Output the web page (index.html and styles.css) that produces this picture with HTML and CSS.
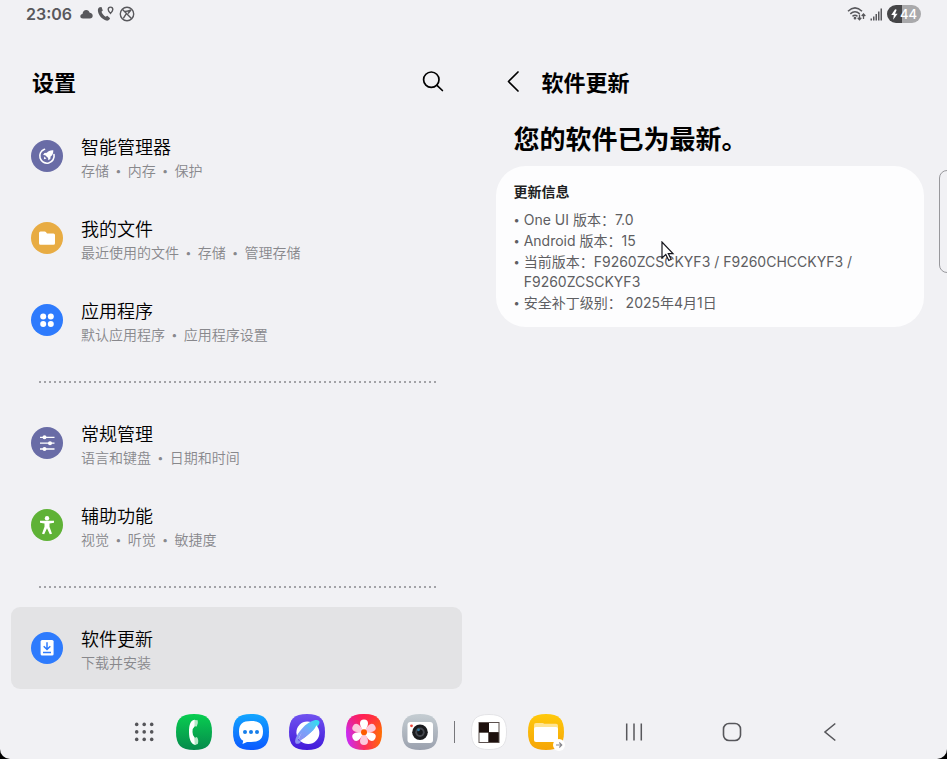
FILE: index.html
```html
<!DOCTYPE html>
<html lang="zh-CN">
<head>
<meta charset="utf-8">
<meta name="viewport" content="width=device-width, initial-scale=1">
<title>设置</title>
<link rel="stylesheet" href="styles.css">
</head>
<body>
<div class="screen">
  <header class="status">
    <div class="status-group">
      <time class="clock">23:06</time>
      <svg width="13" height="10" viewBox="0 0 13 10"><path fill="currentColor" d="M3 9.500C1.300 9.500.3 8.500.3 7.200.3 6 1.200 5.100 2.500 4.900 2.800 2.500 4.200 1 6.200 1c1.900 0 3 1.100 3.500 2.800 1.800.1 3 1.300 3 2.900 0 1.700-1.200 2.800-2.800 2.800z"/></svg>
      <svg width="18" height="16" viewBox="0 0 18 16"><path fill="currentColor" d="M2.600 1.200 4.500.9l1.300 3.500-1.300 1.400c.7 2 2.200 3.800 4.100 5l1.700-1 2.800 2.400c-.7 1.800-2.200 2.800-4 2.300C4.400 13 1.100 8.500.9 4.500.8 3.100 1.400 1.800 2.600 1.200z"/><path fill="none" stroke="currentColor" stroke-width="1.400" d="M13.500 7.400c-1.600-1.800-2.300-2.800-2.300-4a2.300 2.300 0 0 1 4.600 0c0 1.200-.7 2.200-2.300 4z"/></svg>
      <svg width="16" height="16" viewBox="0 0 16 16" fill="none" stroke="currentColor" stroke-width="1.400"><circle cx="8" cy="8" r="6.700"/><path d="M3.300 3.300 12.700 12.700M4.300 12.300 7.200 7.800M6 5.300c2 .2 3.500-.2 6-1.300L9 7.500"/></svg>
    </div>
    <div class="status-group">
      <svg width="20" height="16" viewBox="0 0 20 16" fill="none" stroke="currentColor" stroke-width="1.500"><path d="M2 5.300Q9 -1.600 16 5.300M4.300 7.900q4.700-4.300 9.400 0M6.500 10.400q2.500-2.200 5 0"/><circle cx="9" cy="12.200" r=".6"/><path stroke-width="1.300" d="M13.500 8.500v5M11.700 11.800l1.800 1.900 1.800-1.900M17.500 13V8M15.700 10l1.800-2 1.800 2"/></svg>
      <svg width="13" height="13" viewBox="0 0 13 13" fill="currentColor"><path d="M.5 10.500h1.500v2H.5zM3 8.500h1.500v4H3zM5.500 6h1.500v6.500H5.500zM8 3.500h1.500v9H8zM10.500.5H12v12h-1.500z"/></svg>
      <span class="battery"><svg width="7" height="11" viewBox="0 0 8 12"><path fill="#fff" d="M4.700 0 .3 6.500h2.900L2.500 12l5-7H4.600L6.500.6z"/></svg>44</span>
    </div>
  </header>

  <main class="panes">
    <section class="pane pane-list">
      <div class="bar">
        <h1 class="bar-title">设置</h1>
        <button class="icon-button" aria-label="搜索"><svg width="22" height="22" viewBox="0 0 22 22" fill="none" stroke="#000" stroke-width="1.700" stroke-linecap="round"><circle cx="9.300" cy="8.700" r="7.700"/><path d="m15 14.300 5.400 5.200"/></svg></button>
      </div>
      <nav>
        <a class="row" href="#care">
          <svg class="row-icon" viewBox="0 0 32 32"><circle cx="16" cy="16" r="16" fill="#696ca6"/><path d="M13.500 9.200A7.200 7.200 0 1 0 23 14.500" fill="none" stroke="#fff" stroke-width="1.600" stroke-linecap="round"/><path fill="#fff" d="M22.300 10.200c-3.200-.2-5 .8-6.500 2.600l-2.400.2-1.300 2.100 2.100.2 2.900 2.800.2 2.200 2-1.400.3-2.300c2-1.600 2.800-3.500 2.700-6.400zM13.300 16.500l2.100 2-2.500.7z"/></svg>
          <span class="row-text"><span class="row-title">智能管理器</span><span class="row-sub"><span>存储</span><i>•</i><span>内存</span><i>•</i><span>保护</span></span></span>
        </a>
        <a class="row" href="#files">
          <svg class="row-icon" viewBox="0 0 32 32"><circle cx="16" cy="16" r="16" fill="#e8ac43"/><path fill="#fff" d="M8 11q0-1.500 1.500-1.500h4.200q.7 0 1.200.6l1.100 1.400h6.500q1.500 0 1.500 1.500v8.300q0 1.500-1.500 1.500h-13Q8 22.800 8 21.300z"/></svg>
          <span class="row-text"><span class="row-title">我的文件</span><span class="row-sub"><span>最近使用的文件</span><i>•</i><span>存储</span><i>•</i><span>管理存储</span></span></span>
        </a>
        <a class="row" href="#apps">
          <svg class="row-icon" viewBox="0 0 32 32"><circle cx="16" cy="16" r="16" fill="#2e7bfd"/><g fill="#fff"><circle cx="12.200" cy="12.400" r="3"/><circle cx="19.800" cy="12.400" r="3"/><circle cx="12.200" cy="20" r="3"/><circle cx="19.800" cy="20" r="3"/></g></svg>
          <span class="row-text"><span class="row-title">应用程序</span><span class="row-sub"><span>默认应用程序</span><i>•</i><span>应用程序设置</span></span></span>
        </a>
        <hr class="dots">
        <a class="row" href="#general">
          <svg class="row-icon" viewBox="0 0 32 32"><circle cx="16" cy="16" r="16" fill="#696ca6"/><path d="M9 10.300h14.500M9 16.200h14.500M9 22h14.500" stroke="#fff" stroke-width="1.300"/><g fill="#fff"><circle cx="13.500" cy="10.300" r="2"/><circle cx="19" cy="16.200" r="2"/><circle cx="13.500" cy="22" r="2"/></g></svg>
          <span class="row-text"><span class="row-title">常规管理</span><span class="row-sub"><span>语言和键盘</span><i>•</i><span>日期和时间</span></span></span>
        </a>
        <a class="row" href="#access">
          <svg class="row-icon" viewBox="0 0 32 32"><circle cx="16" cy="16" r="16" fill="#5fb236"/><circle cx="16" cy="9.200" r="2.200" fill="#fff"/><path fill="#fff" d="M9 11.800h14v2l-4.500.8v3.200l2.500 7-2.200.5L16 19.300l-2.800 6-2.200-.5 2.500-7v-3.200L9 13.800z"/></svg>
          <span class="row-text"><span class="row-title">辅助功能</span><span class="row-sub"><span>视觉</span><i>•</i><span>听觉</span><i>•</i><span>敏捷度</span></span></span>
        </a>
        <hr class="dots">
        <a class="row row-active" href="#update" aria-current="page">
          <svg class="row-icon" viewBox="0 0 32 32"><circle cx="16" cy="16" r="16" fill="#2e7bfd"/><rect x="9.600" y="8" width="13" height="15.500" rx="1.500" fill="#fff"/><path d="M16 10.300v7M12.700 14.200l3.300 3.300 3.300-3.300M12 20.400h8" fill="none" stroke="#2e7bfd" stroke-width="1.500"/></svg>
          <span class="row-text"><span class="row-title">软件更新</span><span class="row-sub"><span>下载并安装</span></span></span>
        </a>
      </nav>
    </section>

    <section class="pane pane-detail">
      <div class="bar bar-detail">
        <button class="icon-button" aria-label="返回"><svg width="14" height="22" viewBox="0 0 14 22" fill="none" stroke="#000" stroke-width="1.700" stroke-linecap="round" stroke-linejoin="round"><path d="M12 1 2.500 10.500 12 20"/></svg></button>
        <h2 class="bar-title">软件更新</h2>
      </div>
      <p class="headline">您的软件已为最新。</p>
      <article class="card">
        <h3 class="card-title">更新信息</h3>
        <ul class="facts">
          <li>One UI 版本：7.0</li>
          <li>Android 版本：15</li>
          <li>当前版本：F9260ZCSCKYF3 / F9260CHCCKYF3 / F9260ZCSCKYF3</li>
          <li>安全补丁级别： 2025年4月1日</li>
        </ul>
      </article>
    </section>
  </main>

  <footer class="taskbar">
    <button class="app" aria-label="所有应用"><svg viewBox="0 0 36 36" fill="#555559"><circle cx="10.700" cy="10.400" r="1.800"/><circle cx="18.200" cy="10.400" r="1.800"/><circle cx="25.700" cy="10.400" r="1.800"/><circle cx="10.700" cy="17.900" r="1.800"/><circle cx="18.200" cy="17.900" r="1.800"/><circle cx="25.700" cy="17.900" r="1.800"/><circle cx="10.700" cy="25.400" r="1.800"/><circle cx="18.200" cy="25.400" r="1.800"/><circle cx="25.700" cy="25.400" r="1.800"/></svg></button>
    <div class="apps">
      <button class="app" aria-label="电话"><svg viewBox="0 0 36 36"><defs><linearGradient id="gPhone" x2="0" y2="1"><stop stop-color="#08ce50"/><stop offset="1" stop-color="#068a4c"/></linearGradient></defs><path fill="url(#gPhone)" d="M18 0C31 0 36 5 36 18S31 36 18 36 0 31 0 18 5 0 18 0z"/><path fill="#fff" d="M19 5.800C14.500 6 13 11 13 18s2 12.500 6.500 13q.8-3.200-.7-7.200Q16.500 22 16.500 18t2.300-5.700Q20 9 19 5.800z"/><path fill="#b6e8c8" d="M18.500 5.900l3.200.3q.8 3.300-.9 6.300l-2.300-.3zM18.300 24l2.600-.9q2.200 3 .9 6.800l-3 1z"/></svg></button>
      <button class="app" aria-label="信息"><svg viewBox="0 0 36 36"><defs><linearGradient id="gMsg" x2="0" y2="1"><stop stop-color="#12a6ff"/><stop offset="1" stop-color="#0b58ff"/></linearGradient></defs><path fill="url(#gMsg)" d="M18 0C31 0 36 5 36 18S31 36 18 36 0 31 0 18 5 0 18 0z"/><path fill="#fff" d="M18 7c8.500 0 12 3 12 10.500S26.500 28 18 28h-4l-4.500 2 .7-3.200C7.500 25.500 6 22.500 6 17.500 6 10 9.500 7 18 7z"/><g fill="#167eea"><circle cx="12" cy="18" r="2"/><circle cx="18" cy="18" r="2"/><circle cx="24" cy="18" r="2"/></g></svg></button>
      <button class="app" aria-label="浏览器"><svg viewBox="0 0 36 36"><defs><linearGradient id="gNet" x2="0" y2="1"><stop stop-color="#7052ef"/><stop offset="1" stop-color="#421bda"/></linearGradient><linearGradient id="gRing" x1="0" y1="1" x2="1" y2="0"><stop stop-color="#8f8cf0"/><stop offset=".5" stop-color="#75a5fb"/><stop offset="1" stop-color="#2fe1ef"/></linearGradient></defs><path fill="url(#gNet)" d="M18 0C31 0 36 5 36 18S31 36 18 36 0 31 0 18 5 0 18 0z"/><circle cx="18.200" cy="18.300" r="10.800" fill="#fff"/><path fill="url(#gRing)" d="M6.800 29.400C4.300 26.500 9 18.500 14.500 13 20.500 7.200 27.500 4.800 29.800 6.800s-1 6-5.500 10.700L20 16l6.500-5.500L12 20l-3 5.500 1 1.600 3-1.100-2 3q-3 1.500-4.200.4z"/><path fill="url(#gRing)" d="M9.500 26.500C10 22 13 17.500 17 14S26 8 29.500 8.500C29 12 25 16 21 19.500S13 26.500 9.500 26.500z"/><path fill="#fff" d="M11.500 26.700C15 25 19 21.500 22 18.500s5-5.500 5.200-7.300a10.800 10.800 0 0 1-15.700 15.500z"/></svg></button>
      <button class="app" aria-label="相册"><svg viewBox="0 0 36 36"><defs><linearGradient id="gGal" x1="0" y1=".6" x2="1" y2=".5"><stop stop-color="#c72bfa"/><stop offset=".5" stop-color="#ff3055"/><stop offset="1" stop-color="#ff7000"/></linearGradient><linearGradient id="gGalTop" x2="0" y2="1"><stop stop-color="#ff1655" stop-opacity=".7"/><stop offset=".5" stop-color="#ff1655" stop-opacity="0"/></linearGradient></defs><path fill="url(#gGal)" d="M18 0C31 0 36 5 36 18S31 36 18 36 0 31 0 18 5 0 18 0z"/><path fill="url(#gGalTop)" d="M18 0C31 0 36 5 36 18S31 36 18 36 0 31 0 18 5 0 18 0z"/><defs><path id="petal" d="M0 0C-2.500-4-4-6.500-4-8.800a4 4 0 0 1 8 0C4-6.500 2.500-4 0 0z"/></defs><g transform="translate(18 18.300)"><g fill="#fdc9dc"><use href="#petal" transform="rotate(60)"/><use href="#petal" transform="rotate(180)"/><use href="#petal" transform="rotate(300)"/></g><g fill="#fff"><use href="#petal"/><use href="#petal" transform="rotate(120)"/><use href="#petal" transform="rotate(240)"/></g><circle r="3" fill="#fd5b00"/></g></svg></button>
      <button class="app" aria-label="相机"><svg viewBox="0 0 36 36"><defs><linearGradient id="gCam" x2="0" y2="1"><stop stop-color="#c5cdd2"/><stop offset="1" stop-color="#9ba1ae"/></linearGradient></defs><path fill="url(#gCam)" d="M18 0C31 0 36 5 36 18S31 36 18 36 0 31 0 18 5 0 18 0z"/><rect x="5.500" y="8" width="25.500" height="21" rx="3" fill="#fff"/><circle cx="9.500" cy="11.800" r="1.400" fill="#f0483c"/><circle cx="18" cy="18.300" r="7.800" fill="#1b1c1f"/><circle cx="18" cy="18.300" r="4.700" fill="#45484f"/><circle cx="18" cy="18.300" r="2.800" fill="#15171b"/><circle cx="16.500" cy="15.800" r="1.400" fill="#317aa0"/></svg></button>
    </div>
    <span class="split"></span>
    <div class="recents">
      <button class="app" aria-label="棋盘"><svg viewBox="0 0 36 36"><path fill="#fff" stroke="#e3e3e6" d="M18 .5C31 .5 35.500 5 35.500 18S31 35.500 18 35.500.5 31 .5 18 5 .5 18 .5z"/><path fill="#5b504d" d="M7.500 8h21v21h-21z"/><path fill="#fff" d="M18 9h9.500v9.300H18zM8.500 18.600H17.500V28h-9z"/><path fill="#1d100d" d="M8 9h10v9.600H8zM17.500 18.300h10V28h-10z"/></svg></button>
      <button class="app" aria-label="我的文件"><svg viewBox="0 0 36 36" overflow="visible"><defs><linearGradient id="gDir" x2="0" y2="1"><stop stop-color="#ffc90c"/><stop offset="1" stop-color="#f5a507"/></linearGradient></defs><path fill="url(#gDir)" d="M18 0C31 0 36 5 36 18S31 36 18 36 0 31 0 18 5 0 18 0z"/><path fill="#ffe492" d="M6 11q0-2 2-2h6.500q1 0 1.700.8h11.800q2 0 2 2V18H6z"/><rect x="6" y="13" width="24" height="15" rx="2" fill="#fff"/><circle cx="31" cy="31" r="6" fill="#fff"/><path d="M28 31h5.600M31.300 28.500l2.500 2.500-2.500 2.500" fill="none" stroke="#86868c" stroke-width="1.100"/></svg></button>
    </div>
    <nav class="keys">
      <button class="key" aria-label="最近任务"><svg width="20" height="20" viewBox="0 0 20 20" stroke="#57575b" stroke-width="1.500"><path d="M2.700 1.500v17M10 1.500v17M17.300 1.500v17"/></svg></button>
      <button class="key" aria-label="主屏幕"><svg width="20" height="20" viewBox="0 0 20 20" fill="none" stroke="#57575b" stroke-width="1.600"><rect x="1.500" y="1.500" width="17" height="17" rx="5.500"/></svg></button>
      <button class="key" aria-label="返回"><svg width="20" height="20" viewBox="0 0 20 20" fill="none" stroke="#57575b" stroke-width="1.600"><path d="M15.300 1.500 5 10l10.300 8.500"/></svg></button>
    </nav>
  </footer>

  <span class="edge"></span>
  <svg class="pointer" width="14" height="21" viewBox="0 0 14 21"><path fill="#fff" stroke="#14141c" stroke-width="1.200" d="M1 1v16l3.800-3.500 3 6 2.400-1.200-2.900-5.700H12z"/></svg>
</div>
</body>
</html>
```
FILE: styles.css
```css
* {
  box-sizing: border-box;
}

body {
  margin: 0;
  background: #000;
  color: #000;
  font-family: Inter, "Noto Sans CJK SC", sans-serif;
}

h1, h2, h3, p, ul {
  margin: 0;
  padding: 0;
}

button {
  padding: 0;
  border: 0;
  background: none;
  cursor: pointer;
}

svg {
  display: block;
}

.screen {
  position: relative;
  display: flex;
  flex-direction: column;
  min-height: 100vh;
  overflow: hidden;
  background: #f1f1f4;
  border-radius: 0 0 10px 10px;
}

/* Status bar */
.status {
  display: flex;
  justify-content: space-between;
  height: 28px;
  padding: 0 26px;
  color: #58585c;
}

.status-group {
  display: flex;
  align-items: center;
  gap: 4px;
}

.clock {
  margin-right: 4px;
  font-size: 16px;
  font-weight: 600;
  line-height: 28px;
}

.battery {
  display: flex;
  align-items: center;
  gap: 2px;
  height: 18px;
  padding: 0 4px;
  border-radius: 9px;
  background: linear-gradient(90deg, #454547 43%, #a9a9ab 43%);
  color: #fff;
  font-size: 13px;
  font-weight: 500;
}

/* Two-pane layout */
.panes {
  display: grid;
  grid-template-columns: 1fr 1fr;
  flex: 1;
}

.pane-list {
  padding: 35px 12px 0 11px;
}

.pane-detail {
  padding: 35px 23px 0 22px;
}

.bar {
  display: flex;
  align-items: center;
  justify-content: space-between;
  height: 40px;
  margin-bottom: 12px;
  padding: 0 18px 0 21px;
}

.icon-button {
  padding-bottom: 2px;
}

.bar-detail {
  justify-content: flex-start;
  gap: 22px;
  margin-bottom: 18px;
  padding: 0 10px;
}

.bar-title {
  font-size: 22px;
  font-weight: 700;
  line-height: 40px;
}

/* Settings list */
.row {
  display: flex;
  gap: 18px;
  padding: 21px 20px 15px;
  border-radius: 9px;
  color: inherit;
  text-decoration: none;
}

.row-active {
  background: #e3e3e5;
}

.row-icon {
  flex: none;
  width: 32px;
  height: 32px;
  margin-top: 4px;
}

.row-text {
  display: flex;
  flex-direction: column;
}

.row-title {
  font-size: 18px;
  font-weight: 350;
  line-height: 24px;
}

.row-sub {
  display: flex;
  gap: 6px;
  color: #88888c;
  font-size: 14px;
  font-weight: 350;
  line-height: 22px;
}

.row-sub i {
  font-size: 12px;
  font-style: normal;
}

.dots {
  height: 2px;
  margin: 20px 24px 19px 28px;
  border: 0;
  background: repeating-linear-gradient(90deg, #a3a3a7 0 2px, transparent 2px 5px);
}

/* Update details */
.headline {
  margin-bottom: 7px;
  padding: 0 18px;
  font-size: 26px;
  font-weight: 700;
  line-height: 38px;
}

.card {
  padding: 16px 18px 13px;
  border-radius: 30px;
  background: #fdfdfe;
  line-height: 20px;
}

.card-title {
  margin-bottom: 8px;
  color: #1f1f22;
  font-size: 14px;
  font-weight: 700;
}

.facts {
  display: grid;
  gap: 1px;
  padding-bottom: 1px;
  color: #5e5e62;
  font-size: 14px;
  font-weight: 400;
  list-style: none;
}

.facts li {
  display: flex;
  gap: 4px;
}

.facts li::before {
  content: "•";
  font-size: 11px;
}

/* Taskbar */
.taskbar {
  display: flex;
  align-items: center;
  height: 54px;
  margin: 16px 68px 0 126px;
}

.app {
  width: 36px;
  height: 36px;
}

.apps {
  display: flex;
  flex: 1;
  justify-content: space-between;
  margin: 0 16px 0 14px;
}

.split {
  width: 1px;
  height: 22px;
  background: #77777b;
}

.recents {
  display: flex;
  gap: 21px;
  margin: 0 21px 0 16px;
}

.keys {
  display: flex;
}

.key {
  display: flex;
  justify-content: center;
  width: 98px;
}

/* Overlays */
.edge {
  position: absolute;
  top: 170px;
  right: -8px;
  width: 16px;
  height: 103px;
  border: 1px solid #98989c;
  border-radius: 8px;
}

.pointer {
  position: absolute;
  top: 241px;
  left: 661px;
}
```
